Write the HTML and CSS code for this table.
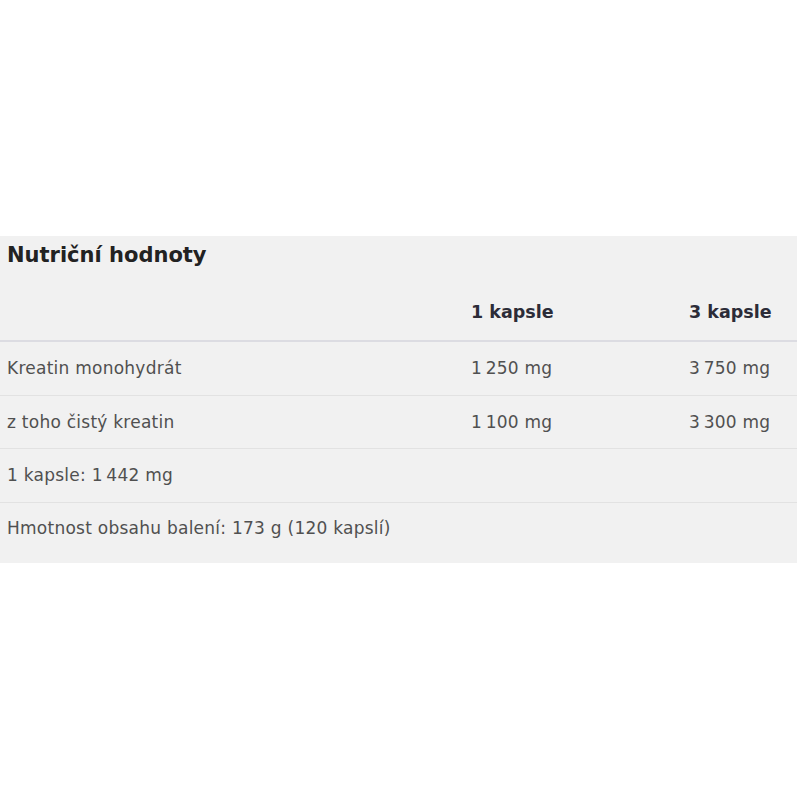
FILE: index.html
```html
<!DOCTYPE html>
<html lang="cs">
<head>
<meta charset="utf-8">
<link rel="stylesheet" href="styles.css">
</head>
<body>
<div class="page">
  <section class="panel">
    <h2 class="title">Nutriční hodnoty</h2>
    <table class="nutri">
      <thead>
        <tr>
          <th class="c-name"></th>
          <th class="c-one">1 kapsle</th>
          <th class="c-three">3 kapsle</th>
        </tr>
      </thead>
      <tbody>
        <tr>
          <td>Kreatin monohydrát</td>
          <td>1&#8201;250 mg</td>
          <td>3&#8201;750 mg</td>
        </tr>
        <tr>
          <td>z toho čistý kreatin</td>
          <td>1&#8201;100 mg</td>
          <td>3&#8201;300 mg</td>
        </tr>
        <tr>
          <td colspan="3">1 kapsle: 1&#8201;442 mg</td>
        </tr>
        <tr class="last">
          <td colspan="3">Hmotnost obsahu balení: 173 g (120 kapslí)</td>
        </tr>
      </tbody>
    </table>
  </section>
</div>
</body>
</html>
```
FILE: styles.css
```css
html, body {
  margin: 0;
  padding: 0;
  background: #ffffff;
}
body {
  font-family: "DejaVu Sans", "Open Sans", sans-serif;
  color: #505050;
}
.page {
  padding-top: 236px;
  width: 797px;
}
.panel {
  background: #f1f1f1;
}
.title {
  margin: 0;
  padding: 5px 7px 0 7px;
  height: 31px;
  font-size: 21px;
  font-weight: 700;
  color: #222222;
  line-height: 28px;
}
.nutri {
  width: 100%;
  border-collapse: collapse;
  font-size: 17px;
  letter-spacing: 0.25px;
}
.nutri th {
  text-align: left;
  font-weight: 700;
  color: #2c2c38;
  font-size: 17.5px;
  letter-spacing: 0;
  height: 69px;
  padding: 12px 0 0 0;
  box-sizing: border-box;
  border-bottom: 2px solid #dcdce2;
}
.c-name { width: 471px; }
.c-one { width: 218px; }
.nutri td {
  padding: 0 0 0 7px;
  height: 52.5px;
  border-bottom: 1px solid #e2e2e2;
  vertical-align: middle;
}
.nutri td + td {
  padding-left: 0;
}
.nutri tr.last td {
  border-bottom: none;
  height: 50px;
  padding-bottom: 10px;
}
```
